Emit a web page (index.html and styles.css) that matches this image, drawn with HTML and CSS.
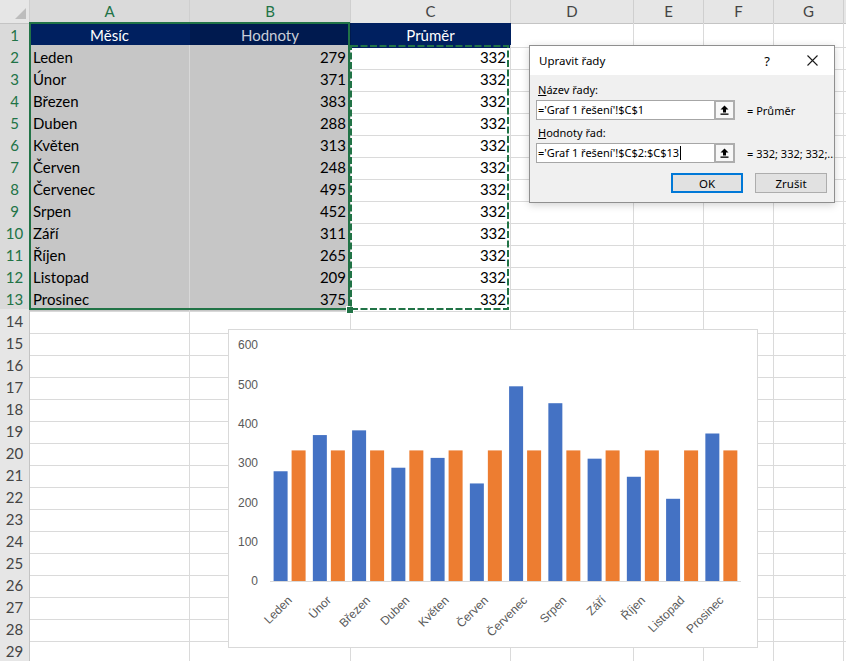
FILE: index.html
```html
<!DOCTYPE html>
<html lang="cs">
<head>
<meta charset="utf-8">
<title>Excel</title>
<link rel="stylesheet" href="styles.css">
</head>
<body>
<div class="sheet">
  <div class="row colhead"><div class="corner"></div><div class="on">A</div><div class="on">B</div><div>C</div><div>D</div><div>E</div><div>F</div><div>G</div><div></div></div>
  <div class="row"><div class="rh on">1</div><div class="nv">Měsíc</div><div class="nvd">Hodnoty</div><div class="nv">Průměr</div><div></div><div></div><div></div><div></div><div></div></div>
  <div class="row"><div class="rh on">2</div><div class="g">Leden</div><div class="g n">279</div><div class="n">332</div><div></div><div></div><div></div><div></div><div></div></div>
  <div class="row"><div class="rh on">3</div><div class="g">Únor</div><div class="g n">371</div><div class="n">332</div><div></div><div></div><div></div><div></div><div></div></div>
  <div class="row"><div class="rh on">4</div><div class="g">Březen</div><div class="g n">383</div><div class="n">332</div><div></div><div></div><div></div><div></div><div></div></div>
  <div class="row"><div class="rh on">5</div><div class="g">Duben</div><div class="g n">288</div><div class="n">332</div><div></div><div></div><div></div><div></div><div></div></div>
  <div class="row"><div class="rh on">6</div><div class="g">Květen</div><div class="g n">313</div><div class="n">332</div><div></div><div></div><div></div><div></div><div></div></div>
  <div class="row"><div class="rh on">7</div><div class="g">Červen</div><div class="g n">248</div><div class="n">332</div><div></div><div></div><div></div><div></div><div></div></div>
  <div class="row"><div class="rh on">8</div><div class="g">Červenec</div><div class="g n">495</div><div class="n">332</div><div></div><div></div><div></div><div></div><div></div></div>
  <div class="row"><div class="rh on">9</div><div class="g">Srpen</div><div class="g n">452</div><div class="n">332</div><div></div><div></div><div></div><div></div><div></div></div>
  <div class="row"><div class="rh on">10</div><div class="g">Září</div><div class="g n">311</div><div class="n">332</div><div></div><div></div><div></div><div></div><div></div></div>
  <div class="row"><div class="rh on">11</div><div class="g">Říjen</div><div class="g n">265</div><div class="n">332</div><div></div><div></div><div></div><div></div><div></div></div>
  <div class="row"><div class="rh on">12</div><div class="g">Listopad</div><div class="g n">209</div><div class="n">332</div><div></div><div></div><div></div><div></div><div></div></div>
  <div class="row"><div class="rh on">13</div><div class="g">Prosinec</div><div class="g n">375</div><div class="n">332</div><div></div><div></div><div></div><div></div><div></div></div>
  <div class="row"><div class="rh">14</div><div></div><div></div><div></div><div></div><div></div><div></div><div></div><div></div></div>
  <div class="row"><div class="rh">15</div><div></div><div></div><div></div><div></div><div></div><div></div><div></div><div></div></div>
  <div class="row"><div class="rh">16</div><div></div><div></div><div></div><div></div><div></div><div></div><div></div><div></div></div>
  <div class="row"><div class="rh">17</div><div></div><div></div><div></div><div></div><div></div><div></div><div></div><div></div></div>
  <div class="row"><div class="rh">18</div><div></div><div></div><div></div><div></div><div></div><div></div><div></div><div></div></div>
  <div class="row"><div class="rh">19</div><div></div><div></div><div></div><div></div><div></div><div></div><div></div><div></div></div>
  <div class="row"><div class="rh">20</div><div></div><div></div><div></div><div></div><div></div><div></div><div></div><div></div></div>
  <div class="row"><div class="rh">21</div><div></div><div></div><div></div><div></div><div></div><div></div><div></div><div></div></div>
  <div class="row"><div class="rh">22</div><div></div><div></div><div></div><div></div><div></div><div></div><div></div><div></div></div>
  <div class="row"><div class="rh">23</div><div></div><div></div><div></div><div></div><div></div><div></div><div></div><div></div></div>
  <div class="row"><div class="rh">24</div><div></div><div></div><div></div><div></div><div></div><div></div><div></div><div></div></div>
  <div class="row"><div class="rh">25</div><div></div><div></div><div></div><div></div><div></div><div></div><div></div><div></div></div>
  <div class="row"><div class="rh">26</div><div></div><div></div><div></div><div></div><div></div><div></div><div></div><div></div></div>
  <div class="row"><div class="rh">27</div><div></div><div></div><div></div><div></div><div></div><div></div><div></div><div></div></div>
  <div class="row"><div class="rh">28</div><div></div><div></div><div></div><div></div><div></div><div></div><div></div><div></div></div>
  <div class="row"><div class="rh">29</div><div></div><div></div><div></div><div></div><div></div><div></div><div></div><div></div></div>
</div>

<div class="selbox"></div>
<div class="handle"></div>
<svg class="ants" width="161" height="267" viewBox="0 0 161 267"><rect x="2" y="2" width="157" height="263" fill="none" stroke="#217346" stroke-width="2" stroke-dasharray="7 2.5"/></svg>

<div class="chart">
  <svg class="chart-svg" width="529" height="318" viewBox="0 0 529 318">
    <g class="ylab">
      <text x="30" y="20">600</text>
      <text x="30" y="59.5">500</text>
      <text x="30" y="99">400</text>
      <text x="30" y="138">300</text>
      <text x="30" y="177.5">200</text>
      <text x="30" y="217">100</text>
      <text x="30" y="256">0</text>
    </g>
    <g fill="#4472c4">
      <rect x="45.6" y="142.26" width="14" height="109.74"/>
      <rect x="84.85" y="106.07" width="14" height="145.93"/>
      <rect x="124.1" y="101.35" width="14" height="150.65"/>
      <rect x="163.35" y="138.72" width="14" height="113.28"/>
      <rect x="202.6" y="128.89" width="14" height="123.11"/>
      <rect x="241.85" y="154.45" width="14" height="97.55"/>
      <rect x="281.1" y="57.3" width="14" height="194.7"/>
      <rect x="320.35" y="74.21" width="14" height="177.79"/>
      <rect x="359.6" y="129.67" width="14" height="122.33"/>
      <rect x="398.85" y="147.77" width="14" height="104.23"/>
      <rect x="438.1" y="169.79" width="14" height="82.21"/>
      <rect x="477.35" y="104.5" width="14" height="147.5"/>
    </g>
    <g fill="#ed7d31">
      <rect x="63.6" y="121.41" width="14" height="130.59"/>
      <rect x="102.85" y="121.41" width="14" height="130.59"/>
      <rect x="142.1" y="121.41" width="14" height="130.59"/>
      <rect x="181.35" y="121.41" width="14" height="130.59"/>
      <rect x="220.6" y="121.41" width="14" height="130.59"/>
      <rect x="259.85" y="121.41" width="14" height="130.59"/>
      <rect x="299.1" y="121.41" width="14" height="130.59"/>
      <rect x="338.35" y="121.41" width="14" height="130.59"/>
      <rect x="377.6" y="121.41" width="14" height="130.59"/>
      <rect x="416.85" y="121.41" width="14" height="130.59"/>
      <rect x="456.1" y="121.41" width="14" height="130.59"/>
      <rect x="495.35" y="121.41" width="14" height="130.59"/>
    </g>
    <line x1="42" y1="252.5" x2="513" y2="252.5" stroke="#d9d9d9" stroke-width="1"/>
    <g class="xlab">
      <text transform="translate(64.6 272) rotate(-45)">Leden</text>
      <text transform="translate(103.85 272) rotate(-45)">Únor</text>
      <text transform="translate(143.1 272) rotate(-45)">Březen</text>
      <text transform="translate(182.35 272) rotate(-45)">Duben</text>
      <text transform="translate(221.6 272) rotate(-45)">Květen</text>
      <text transform="translate(260.85 272) rotate(-45)">Červen</text>
      <text transform="translate(300.1 272) rotate(-45)">Červenec</text>
      <text transform="translate(339.35 272) rotate(-45)">Srpen</text>
      <text transform="translate(378.6 272) rotate(-45)">Září</text>
      <text transform="translate(417.85 272) rotate(-45)">Říjen</text>
      <text transform="translate(457.1 272) rotate(-45)">Listopad</text>
      <text transform="translate(496.35 272) rotate(-45)">Prosinec</text>
    </g>
  </svg>
</div>

<div class="dlg">
  <div class="dlg-title">
    <span class="dlg-name">Upravit řady</span>
    <span class="dlg-help">?</span>
    <span class="dlg-close"><svg width="11" height="11" viewBox="0 0 11 11"><path d="M0.5 0.5L10.5 10.5M10.5 0.5L0.5 10.5" stroke="#1a1a1a" stroke-width="1.1" fill="none"/></svg></span>
  </div>
  <div class="dlg-body">
    <div class="lbl"><u>N</u>ázev řady:</div>
    <div class="frow">
      <div class="field">='Graf 1 řešení'!$C$1</div>
      <div class="refbtn"><svg width="9" height="10" viewBox="0 0 9 10"><path d="M4.5 0.5L8.5 4.5H6V7.5H3V4.5H0.5Z" fill="#000"/><rect x="0.5" y="8.5" width="8" height="1.3" fill="#000"/></svg></div>
      <div class="val">= Průměr</div>
    </div>
    <div class="lbl lbl2"><u>H</u>odnoty řad:</div>
    <div class="frow">
      <div class="field">='Graf 1 řešení'!$C$2:$C$13<span class="caret"></span></div>
      <div class="refbtn"><svg width="9" height="10" viewBox="0 0 9 10"><path d="M4.5 0.5L8.5 4.5H6V7.5H3V4.5H0.5Z" fill="#000"/><rect x="0.5" y="8.5" width="8" height="1.3" fill="#000"/></svg></div>
      <div class="val">= 332; 332; 332;...</div>
    </div>
    <div class="btns">
      <div class="btn ok">OK</div>
      <div class="btn">Zrušit</div>
    </div>
  </div>
</div>
</body>
</html>
```

FILE: styles.css
```css
html, body {
  margin: 0;
  padding: 0;
  overflow: hidden;
  background: #fff;
}
body {
  width: 846px;
  height: 661px;
  position: relative;
  font-family: Lato, "Liberation Sans", sans-serif;
}
.sheet {
  display: flex;
  flex-direction: column;
}
.row {
  display: grid;
  grid-template-columns: 30px 160px 161px 160px 123px 70px 70px 70px 40px;
  height: 22px;
}
.row > div {
  box-sizing: border-box;
  border-right: 1px solid #dadada;
  border-bottom: 1px solid #dadada;
  font-size: 15px;
  line-height: 24px;
  padding: 0 3px;
  white-space: nowrap;
  color: #000;
}
.colhead {
  height: 23px;
}
.colhead > div {
  background: #e6e6e6;
  color: #444;
  text-align: center;
  border-right-color: #cfcfcf;
  border-bottom-color: #c4c4c4;
  line-height: 23px;
}
.row > .rh {
  background: #e6e6e6;
  color: #444;
  text-align: center;
  border-right-color: #c4c4c4;
  border-bottom-color: #d4d4d4;
  padding: 0;
}
.row > .on {
  color: #217346;
  background: #dadada;
}
.corner {
  position: relative;
}
.corner::after {
  content: "";
  position: absolute;
  right: 3px;
  bottom: 4px;
  width: 0;
  height: 0;
  border-left: 11px solid transparent;
  border-bottom: 11px solid #bdbdbd;
}
.row > .g {
  background: #c6c6c6;
  border-color: #d8d8d8;
}
.row > .n {
  text-align: right;
  padding-right: 4px;
}
.row > .nv {
  background: #002060;
  border-color: #002060;
  color: #fff;
  text-align: center;
}
.row > .nvd {
  background: #001a4f;
  border-color: #001a4f;
  color: #c9ced8;
  text-align: center;
}

/* selection overlays */
.selbox {
  position: absolute;
  left: 29px;
  top: 22px;
  width: 321px;
  height: 288px;
  box-sizing: border-box;
  border: 2px solid #217346;
}
.handle {
  position: absolute;
  left: 347px;
  top: 307px;
  width: 6px;
  height: 6px;
  background: #217346;
  box-shadow: 0 0 0 1px #fff;
}
.ants {
  position: absolute;
  left: 349px;
  top: 44px;
}

/* chart */
.chart {
  position: absolute;
  left: 228px;
  top: 329px;
  width: 530px;
  height: 319px;
  box-sizing: border-box;
  border: 1px solid #d9d9d9;
  background: #fff;
}
.chart-svg {
  display: block;
  margin: -1px 0 0 -1px;
  font-family: "Liberation Sans", Arial, sans-serif;
  font-size: 12px;
}
.ylab text {
  fill: #595959;
  text-anchor: end;
}
.xlab text {
  fill: #595959;
  text-anchor: end;
}

/* dialog */
.dlg {
  position: absolute;
  left: 529px;
  top: 45px;
  width: 306px;
  height: 158px;
  box-sizing: border-box;
  border: 1px solid #8f8f8f;
  box-shadow: 0 2px 8px rgba(0, 0, 0, 0.18);
  display: flex;
  flex-direction: column;
  overflow: hidden;
  font-family: "Noto Sans", "Liberation Sans", sans-serif;
  font-size: 11px;
  color: #000;
}
.dlg-title {
  height: 29px;
  flex-shrink: 0;
  background: #fff;
  display: flex;
  align-items: center;
  padding-left: 9px;
}
.dlg-name {
  flex: 1;
  font-size: 11.5px;
}
.dlg-help {
  width: 46px;
  text-align: center;
  font-size: 13px;
}
.dlg-close {
  width: 44px;
  display: flex;
  justify-content: center;
  align-items: center;
}
.dlg-body {
  flex: 1;
  background: #f0f0f0;
  padding: 7px 7px 0 6px;
}
.lbl {
  margin-left: 2px;
  height: 16px;
  line-height: 16px;
}
.lbl u {
  text-decoration: underline;
  text-underline-offset: 1px;
}
.lbl2 {
  margin-top: 5px;
}
.frow {
  display: flex;
  align-items: center;
  height: 20px;
  margin-top: 2px;
}
.field {
  flex: 0 0 178px;
  width: 178px;
  height: 20px;
  box-sizing: border-box;
  border: 1px solid #a6a6a6;
  border-right: none;
  background: #fff;
  line-height: 18px;
  padding-left: 1px;
  white-space: nowrap;
  overflow: hidden;
  display: flex;
  align-items: center;
}
.caret {
  display: inline-block;
  width: 1px;
  height: 14px;
  background: #000;
  margin-left: 1px;
}
.refbtn {
  flex: 0 0 21px;
  width: 21px;
  height: 20px;
  box-sizing: border-box;
  border: 2px solid #adadad;
  background: #f7f7f7;
  display: flex;
  align-items: center;
  justify-content: center;
}
.val {
  margin-left: 12px;
  white-space: nowrap;
  flex-shrink: 0;
}
.btns {
  display: flex;
  justify-content: flex-end;
  gap: 12px;
  margin-top: 10px;
}
.btn {
  width: 72px;
  height: 20px;
  box-sizing: border-box;
  border: 1px solid #adadad;
  background: #e1e1e1;
  display: flex;
  align-items: center;
  justify-content: center;
  font-size: 11.5px;
}
.btn.ok {
  border: 2px solid #0078d7;
}
```
